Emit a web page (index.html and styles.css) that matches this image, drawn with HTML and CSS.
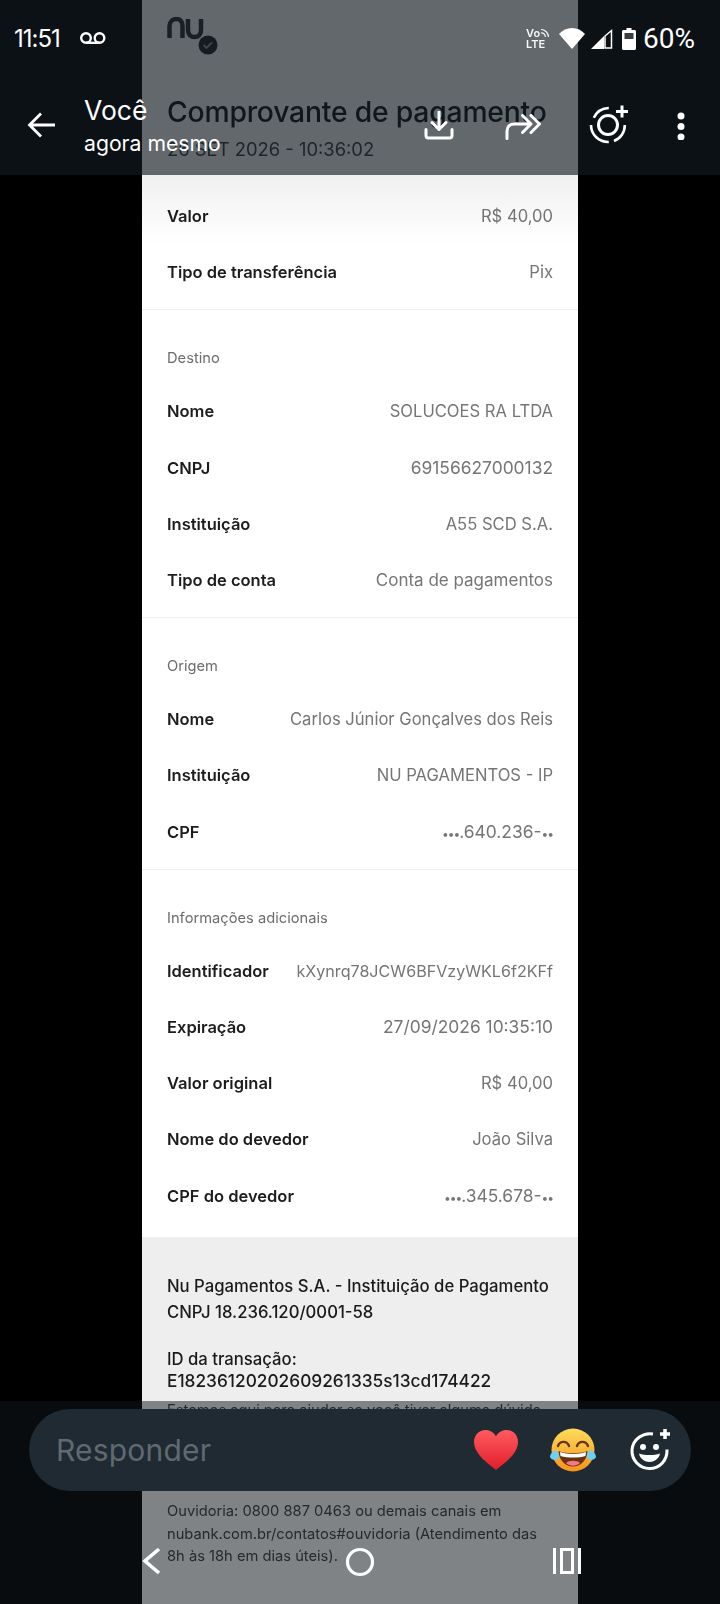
FILE: index.html
```html
<!DOCTYPE html>
<html lang="pt-BR">
<head>
<meta charset="utf-8">
<title>Comprovante</title>
<link rel="stylesheet" href="styles.css">
</head>
<body>
<main class="doc">
  <header class="doc-head">
    <div class="logo">
      <svg width="52" height="42" viewBox="0 0 52 42"><path class="logo-nu" d="M2.500 21V9C2.500 4.500 6 2 9.500 2C13 2 15.500 4.500 15.500 9V21M21 2V13C21 18 24 20 27.500 20C31 20 34 18 34 13V2"/><circle class="logo-badge" cx="41" cy="28" r="9.500"/><path class="logo-check" d="M36.500 28l3 3 5.500-5.500"/></svg>
    </div>
    <h1 class="doc-title">Comprovante de pagamento</h1>
    <p class="doc-date">26 SET 2026 - 10:36:02</p>
  </header>
  <section class="sec sec-first">
    <div class="row"><span class="k">Valor</span><span class="v">R$ 40,00</span></div>
    <div class="row"><span class="k">Tipo de transferência</span><span class="v">Pix</span></div>
  </section>
  <section class="sec">
    <h2 class="sec-title">Destino</h2>
    <div class="row"><span class="k">Nome</span><span class="v">SOLUCOES RA LTDA</span></div>
    <div class="row"><span class="k">CNPJ</span><span class="v v-num">69156627000132</span></div>
    <div class="row"><span class="k">Instituição</span><span class="v">A55 SCD S.A.</span></div>
    <div class="row"><span class="k">Tipo de conta</span><span class="v v-wide">Conta de pagamentos</span></div>
  </section>
  <section class="sec">
    <h2 class="sec-title">Origem</h2>
    <div class="row"><span class="k">Nome</span><span class="v">Carlos Júnior Gonçalves dos Reis</span></div>
    <div class="row"><span class="k">Instituição</span><span class="v">NU PAGAMENTOS - IP</span></div>
    <div class="row"><span class="k">CPF</span><span class="v v-num"><span class="dots">•••</span>.640.236-<span class="dots">••</span></span></div>
  </section>
  <section class="sec sec-last">
    <h2 class="sec-title">Informações adicionais</h2>
    <div class="row"><span class="k">Identificador</span><span class="v v-id">kXynrq78JCW6BFVzyWKL6f2KFf</span></div>
    <div class="row"><span class="k">Expiração</span><span class="v v-num">27/09/2026 10:35:10</span></div>
    <div class="row"><span class="k">Valor original</span><span class="v">R$ 40,00</span></div>
    <div class="row"><span class="k">Nome do devedor</span><span class="v">João Silva</span></div>
    <div class="row"><span class="k">CPF do devedor</span><span class="v v-num"><span class="dots">•••</span>.345.678-<span class="dots">••</span></span></div>
  </section>
  <footer class="foot">
    <p class="foot-strong">Nu Pagamentos S.A. - Instituição de Pagamento<br>CNPJ 18.236.120/0001-58</p>
    <p class="foot-id">ID da transação:<br><span class="foot-code">E18236120202609261335s13cd174422</span></p>
    <p class="foot-help">Estamos aqui para ajudar se você tiver alguma dúvida.</p>
    <p class="foot-ouv">Ouvidoria: 0800 887 0463 ou demais canais em<br>nubank.com.br/contatos#ouvidoria (Atendimento das<br>8h às 18h em dias úteis).</p>
  </footer>
</main>

<div class="shade"></div>

<div class="top">
  <div class="status">
    <div class="status-left">
      <span class="clock">11:51</span>
      <svg class="ic-vm" width="28" height="14" viewBox="0 0 28 14"><circle cx="7" cy="7" r="4.800"/><circle cx="20.500" cy="7" r="4.800"/><path d="M7 11.800H20.500"/></svg>
    </div>
    <div class="status-right">
      <span class="volte"><span class="volte-vo">Vo<svg width="10" height="10" viewBox="0 0 10 10"><path d="M1 1.500C5 1.500 8.500 5 8.500 9M1 4.800C3.500 4.800 5.300 6.600 5.300 9"/></svg></span><span>LTE</span></span>
      <svg class="ic-wifi" width="26" height="21" viewBox="0 0 26 21"><path d="M13 21L0 6C7-2 19-2 26 6Z"/></svg>
      <svg class="ic-signal" width="22" height="21" viewBox="0 0 22 21"><path class="sig-fill" d="M0 21L13 8V21Z"/><path class="sig-line" d="M14 8V20H20.500V2.500Z"/></svg>
      <svg class="ic-batt" width="14" height="22" viewBox="0 0 14 22"><path d="M4.500 0H9.500V2H12.500C13.300 2 14 2.700 14 3.500V20.500C14 21.300 13.300 22 12.500 22H1.500C.7 22 0 21.300 0 20.500V3.500C0 2.700.7 2 1.500 2H4.500Z"/><rect class="batt-win" x="2.500" y="5" width="9" height="6"/></svg>
      <span class="pct">60%</span>
    </div>
  </div>
  <div class="appbar">
    <svg class="ic-back" width="30" height="28" viewBox="0 0 30 28"><path d="M28 14H3M14 2.500L2.500 14 14 25.500"/></svg>
    <div class="who">
      <div class="who-name">Você</div>
      <div class="who-time">agora mesmo</div>
    </div>
    <div class="actions">
      <svg class="ic-dl" width="30" height="30" viewBox="0 0 30 30"><path d="M15 1V18M8 11.500L15 18.500 22 11.500M2 18.500V24.500C2 26 3 27 4.500 27H25.500C27 27 28 26 28 24.500V18.500"/></svg>
      <svg class="ic-fwd" width="36" height="26" viewBox="0 0 36 26"><path d="M2 24.500V17C2 12.500 5 10 9.500 10H24M17.500 1.500L26 10 17.500 18.500M26 1.500L34.500 10 26 18.500"/></svg>
      <svg class="ic-status" width="42" height="42" viewBox="0 0 42 42"><circle class="st-in" cx="20" cy="22" r="9.500"/><path class="st-out" d="M5.800 14.800A17 17 0 0 1 20.800 5M36.800 22A16.800 16.800 0 0 1 26 38M20.800 39A17 17 0 0 1 3 22"/><path class="st-plus" d="M34 2.500V14.500M28 8.500H40"/></svg>
      <svg class="ic-more" width="8" height="28" viewBox="0 0 8 28"><circle cx="4" cy="4" r="3.500"/><circle cx="4" cy="14.500" r="3.500"/><circle cx="4" cy="25" r="3.500"/></svg>
    </div>
  </div>
</div>

<div class="bottom">
  <div class="reply">
    <span class="reply-text">Responder</span>
    <div class="reply-emoji">
      <svg class="em-heart" width="46" height="42" viewBox="0 0 46 42"><defs><linearGradient id="hg" x1="0" y1="0" x2="0" y2="1"><stop offset="0" stop-color="#ff5a5f"/><stop offset="1" stop-color="#e01e2b"/></linearGradient></defs><path fill="url(#hg)" d="M23 41C10 31 1 23 1 13C1 6 6 1 12.500 1C17 1 21 3.500 23 7.500C25 3.500 29 1 33.500 1C40 1 45 6 45 13C45 23 36 31 23 41Z"/></svg>
      <svg class="em-joy" width="48" height="46" viewBox="0 0 48 46"><defs><linearGradient id="jg" x1="0" y1="0" x2="0" y2="1"><stop offset="0" stop-color="#fedc5a"/><stop offset="1" stop-color="#f6921e"/></linearGradient></defs><circle cx="24" cy="23" r="21.500" fill="url(#jg)"/><path class="joy-eye" d="M9 19C11 13.500 18 13.500 20 19M28 19C30 13.500 37 13.500 39 19"/><path d="M9.500 24C17 27 31 27 38.500 24C38 34 31 39.500 24 39.500C17 39.500 10 34 9.500 24Z" fill="#6b3210"/><path d="M11 25C18 27.500 30 27.500 37 25L36.500 29C29 31 19 31 11.500 29Z" fill="#fff"/><path d="M17 36C20 33 28 33 31 36C27 39.500 21 39.500 17 36Z" fill="#f2788a"/><path d="M7 23C10 26 11 29 9 32C7 34 2 33 1 30C1 27 4 24 7 23Z" fill="#6fd0f0"/><path d="M41 23C38 26 37 29 39 32C41 34 46 33 47 30C47 27 44 24 41 23Z" fill="#6fd0f0"/></svg>
      <svg class="em-add" width="44" height="44" viewBox="0 0 44 44"><path class="add-ring" d="M24 6C14 4.500 4 11 3 22C2.500 32 10.500 40.500 20.500 40.500C31 40.500 38.500 32 38 21.500"/><circle class="add-fill" cx="14" cy="19" r="3"/><circle class="add-fill" cx="27" cy="19" r="3"/><path class="add-fill" d="M10 25.500C16 27.500 25 27.500 31 25.500C30 31 25 34 20.500 34C16 34 11 31 10 25.500Z"/><path class="add-plus" d="M36 1V11M31 6H41"/></svg>
    </div>
  </div>
  <nav class="nav">
    <svg class="nav-back" width="20" height="28" viewBox="0 0 20 28"><path d="M17 2L3 14 17 26"/></svg>
    <svg class="nav-home" width="30" height="30" viewBox="0 0 30 30"><circle cx="15" cy="15" r="12.500"/></svg>
    <svg class="nav-rec" width="28" height="26" viewBox="0 0 28 26"><path d="M1.500 0V26M26.500 0V26"/><rect x="8.500" y="1.500" width="11" height="23"/></svg>
  </nav>
</div>
</body>
</html>
```
FILE: styles.css
```css
* { box-sizing: border-box; }
html, body { margin: 0; height: 100%; }
body {
  position: relative;
  width: 720px;
  height: 1604px;
  overflow: hidden;
  background: #000;
  font-family: "Inter", "Liberation Sans", sans-serif;
}
.doc {
  width: 436px;
  height: 1604px;
  margin-left: 142px;
  background: #fff;
  overflow: hidden;
  display: flex;
  flex-direction: column;
  filter: blur(0.35px);
}
.doc-head { height: 188px; padding: 0 25px; position: relative; flex: none; }
.logo { padding-top: 17px; height: 92px; }
.logo-nu { fill: none; stroke: #2a2d30; stroke-width: 4.500; }
.logo-badge { fill: #1d2024; }
.logo-check { fill: none; stroke: #9a9da0; stroke-width: 1.8; }
.doc-title { margin: 0; font-size: 28.3px; line-height: 40px; font-weight: 500; color: #0f1216; letter-spacing: -0.2px; white-space: nowrap; }
.doc-date { margin: 0; padding-top: 2.500px; font-size: 18.400px; line-height: 28px; color: #3a3c3e; white-space: nowrap; }
.sec { padding: 38px 25px 9px; border-bottom: 1px solid #f0f0f0; flex: none; }
.sec-first { padding-top: 0; padding-bottom: 9px; }
.sec-last { padding-bottom: 13px; border-bottom: 0; }
.sec-title { margin: 0 0 15px; height: 20px; font-size: 14.700px; line-height: 20px; font-weight: 400; color: #6d6d6d; }
.row { height: 56.200px; display: flex; align-items: center; justify-content: space-between; white-space: nowrap; }
.k { font-size: 16.500px; font-weight: 600; color: #1c1c1c; }
.v { font-size: 16.600px; font-weight: 400; color: #757575; }
.v-num { font-size: 17.400px; }
.v-wide { font-size: 17px; }
.v-id { font-size: 16.100px; }
.dots { font-size: 12px; letter-spacing: -1px; }
.foot { background: #eeeeee; padding: 36px 25px 0; flex: 1; font-size: 16.700px; color: #1a1a1a; white-space: nowrap; }
.foot p { margin: 0; }
.foot-strong { line-height: 26.500px; font-weight: 550; }
.foot .foot-id { margin-top: 22px; line-height: 22.500px; font-weight: 550; }
.foot-code { font-size: 17.300px; }
.foot .foot-help { margin-top: 6px; font-size: 14.700px; line-height: 22.500px; color: #3a3a3a; }
.foot .foot-ouv { margin-top: 79px; font-size: 14.700px; line-height: 22.500px; color: #3a3a3a; }

.shade {
  position: absolute; left: 0; right: 0; top: 175px; height: 70px;
  background: linear-gradient(rgba(0,0,0,.06), rgba(0,0,0,0));
}
.top {
  position: absolute; left: 0; right: 0; top: 0; height: 175px;
  background: rgba(17, 26, 32, .66);
  color: #fff;
}
.status { height: 78px; display: flex; justify-content: space-between; padding: 26px 25px 0 14px; }
.status-left { display: flex; align-items: flex-start; gap: 19px; }
.clock { font-size: 24px; line-height: 26px; letter-spacing: -1px; }
.ic-vm { margin-top: 5px; fill: none; stroke: #fff; stroke-width: 2.400; }
.status-right { display: flex; align-items: flex-start; }
.volte { display: flex; flex-direction: column; font-size: 11px; line-height: 11px; font-weight: 600; width: 33px; margin-top: 2px; opacity: .95; }
.volte-vo { display: flex; align-items: flex-start; }
.volte-vo svg { fill: none; stroke: #fff; stroke-width: 1.200; }
.ic-wifi { fill: #fff; margin-top: 2px; }
.ic-signal { margin: 2px 0 0 6px; }
.sig-fill { fill: #fff; }
.sig-line { fill: none; stroke: #fff; stroke-width: 1.500; }
.ic-batt { margin: 2px 0 0 9px; fill: #fff; }
.batt-win { fill: #3a3f43; }
.pct { font-family: "Roboto", sans-serif; font-size: 28px; line-height: 26px; margin-left: 7px; }

.appbar { display: flex; align-items: flex-start; padding-left: 27px; position: relative; }
.ic-back { margin-top: 33px; fill: none; stroke: #fff; stroke-width: 2.800; }
.who { margin-left: 27px; padding-top: 16px; white-space: nowrap; }
.who-name { font-size: 26.500px; line-height: 32px; }
.who-time { font-size: 21.200px; line-height: 28px; margin-top: 3px; }
.actions { margin-left: auto; display: flex; align-items: flex-start; }
.ic-dl { margin: 33px 0 0; fill: none; stroke: #fff; stroke-width: 3; stroke-linecap: round; stroke-linejoin: round; }
.ic-fwd { margin: 36px 0 0 51px; fill: none; stroke: #fff; stroke-width: 3; stroke-linecap: round; stroke-linejoin: round; }
.ic-status { margin: 25px 0 0 47px; }
.st-in { fill: none; stroke: #fff; stroke-width: 3; }
.st-out { fill: none; stroke: #fff; stroke-width: 2.600; }
.st-plus { fill: none; stroke: #fff; stroke-width: 3; }
.ic-more { margin: 34px 35px 0 47px; fill: #fff; }

.bottom {
  position: absolute; left: 0; right: 0; top: 1401px; bottom: 0;
  background: rgba(16, 24, 30, .5);
  padding: 8px 29px 0;
}
.reply {
  height: 82px; border-radius: 41px; background: #1f2a33;
  display: flex; align-items: center; justify-content: space-between;
  padding-left: 27px;
}
.reply-text { font-size: 30px; color: #5f6a70; letter-spacing: .2px; }
.reply-emoji { display: flex; align-items: center; }
.em-heart { margin-right: 30px; }
.em-joy { margin-right: 32px; }
.em-add { margin-right: 18px; }
.joy-eye { fill: none; stroke: #6b3210; stroke-width: 2.400; stroke-linecap: round; }
.add-ring { fill: none; stroke: #fff; stroke-width: 3; }
.add-fill { fill: #fff; }
.add-plus { fill: none; stroke: #fff; stroke-width: 3.500; }

.nav { position: absolute; left: 0; right: 0; top: 146px; display: flex; align-items: flex-start; }
.nav-back { margin-left: 142px; fill: none; stroke: #fff; stroke-width: 3.600; }
.nav-home { margin: 0 0 0 183px; fill: none; stroke: #fff; stroke-width: 3.200; }
.nav-rec { margin: 1px 0 0 178px; fill: none; stroke: #fff; stroke-width: 3; }
```
